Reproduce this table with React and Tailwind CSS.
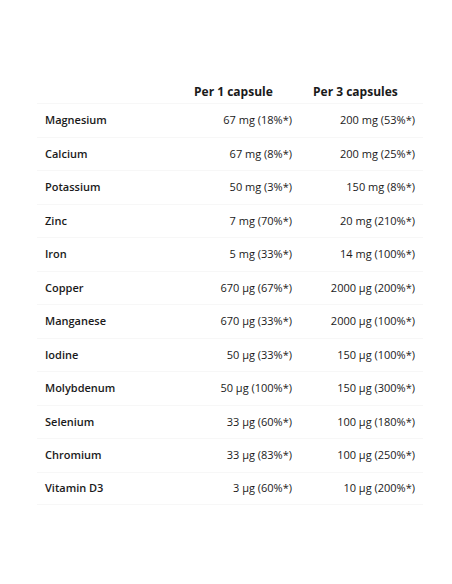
import React from "react";

const rows = [
  ["Magnesium", "67 mg (18%*)", "200 mg (53%*)"],
  ["Calcium", "67 mg (8%*)", "200 mg (25%*)"],
  ["Potassium", "50 mg (3%*)", "150 mg (8%*)"],
  ["Zinc", "7 mg (70%*)", "20 mg (210%*)"],
  ["Iron", "5 mg (33%*)", "14 mg (100%*)"],
  ["Copper", "670 µg (67%*)", "2000 µg (200%*)"],
  ["Manganese", "670 µg (33%*)", "2000 µg (100%*)"],
  ["Iodine", "50 µg (33%*)", "150 µg (100%*)"],
  ["Molybdenum", "50 µg (100%*)", "150 µg (300%*)"],
  ["Selenium", "33 µg (60%*)", "100 µg (180%*)"],
  ["Chromium", "33 µg (83%*)", "100 µg (250%*)"],
  ["Vitamin D3", "3 µg (60%*)", "10 µg (200%*)"],
];

export default function App() {
  return (
    <div
      className="w-[452px] h-[584px] bg-white pt-[72px] pl-[37px] text-[#1a1a1a] text-[11px]"
      style={{ fontFamily: '"Open Sans", "Noto Sans", sans-serif' }}
    >
      <div className="w-[386px]">
        <div className="grid grid-cols-[149px_114px_123px] h-[31px] items-end pb-[3px] text-[12px] leading-[16px] font-bold">
          <div />
          <div className="pl-[8px]">Per 1 capsule</div>
          <div className="pl-[13px]">Per 3 capsules</div>
        </div>
        {rows.map((r, i) => (
          <div
            key={r[0]}
            className={
              "grid grid-cols-[149px_114px_123px] h-[33.5px] items-center border-t border-[#f7f7f7]" +
              (i === rows.length - 1 ? " border-b" : "")
            }
          >
            <div className="pl-[8px] font-semibold">{r[0]}</div>
            <div className="pr-[8px] text-right">{r[1]}</div>
            <div className="pr-[8px] text-right">{r[2]}</div>
          </div>
        ))}
      </div>
    </div>
  );
}
